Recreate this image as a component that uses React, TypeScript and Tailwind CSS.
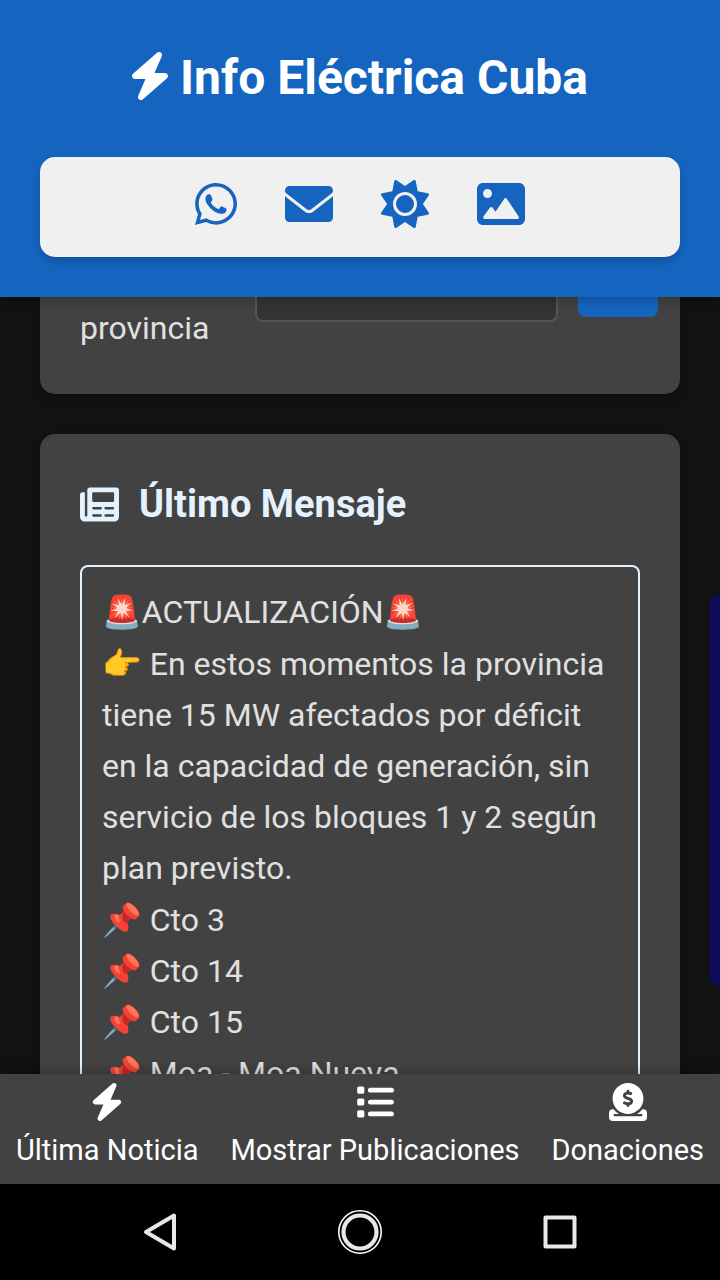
import React from "react";
import { FaCircleDollarToSlot, FaList, FaSun, FaWhatsapp } from "react-icons/fa6";

type IconProps = { className?: string };

function BoltIcon({ className }: IconProps) {
  return (
    <svg viewBox="0 0 384 512" className={className} fill="currentColor" aria-hidden="true">
      <path d="M240.500 224H352C365.300 224 377.300 232.300 381.100 244.700C386.600 257.200 383.100 271.300 373.100 280.100L117.100 504.100C105.800 513.900 89.270 514.700 77.190 505.900C65.100 497.100 60.700 481.100 66.590 467.400L143.500 288H31.100C18.670 288 6.733 279.700 2.044 267.300C-2.645 254.800 .8944 240.700 10.930 231.900L266.900 7.918C278.200-1.920 294.700-2.669 306.800 6.114C318.900 14.900 323.300 30.870 317.400 44.610L240.500 224z" />
    </svg>
  );
}

function EnvelopeIcon({ className }: IconProps) {
  return (
    <svg viewBox="0 0 512 512" className={className} fill="currentColor" aria-hidden="true">
      <path d="M256 352c-16.530 0-33.060-5.422-47.160-16.410L0 173.200V400C0 426.500 21.490 448 48 448h416c26.510 0 48-21.490 48-48V173.200l-208.800 162.500C289.100 346.600 272.500 352 256 352zM16.290 145.300l212.200 165.100c16.190 12.600 38.870 12.600 55.060 0l212.200-165.100C505.100 137.300 512 125 512 112C512 85.490 490.500 64 464 64h-416C21.490 64 0 85.490 0 112C0 125 6.010 137.300 16.290 145.300z" />
    </svg>
  );
}

function ImageIcon({ className }: IconProps) {
  return (
    <svg viewBox="0 0 512 512" className={className} fill="currentColor" aria-hidden="true">
      <path d="M448 32H64C28.650 32 0 60.650 0 96v320c0 35.350 28.650 64 64 64h384c35.350 0 64-28.650 64-64V96C512 60.650 483.300 32 448 32zM112 96c26.510 0 48 21.490 48 48S138.500 192 112 192s-48-21.490-48-48S85.480 96 112 96zM446.100 407.600C443.300 412.800 437.900 416 432 416H82.010c-6.021 0-11.530-3.379-14.260-8.750c-2.730-5.367-2.215-11.810 1.334-16.680l70-96C142.100 290.400 146.900 288 152 288s9.916 2.441 12.930 6.574l32.460 44.510l93.300-139.100C293.700 194.700 298.700 192 304 192s10.350 2.672 13.310 7.125l128 192C448.600 396 448.900 402.300 446.100 407.600z" />
    </svg>
  );
}

function NewspaperIcon({ className }: IconProps) {
  return (
    <svg viewBox="0 0 512 512" className={className} fill="currentColor" aria-hidden="true">
      <path d="M480 32H128C110.300 32 96 46.330 96 64v336C96 408.800 88.840 416 80 416S64 408.800 64 400V96H32C14.330 96 0 110.300 0 128v288c0 35.350 28.650 64 64 64h384c35.350 0 64-28.650 64-64V64C512 46.330 497.700 32 480 32zM272 416h-96c-8.800 0-16-7.200-16-16s7.200-16 16-16h96c8.800 0 16 7.200 16 16S280.800 416 272 416zM272 320h-96c-8.800 0-16-7.200-16-16s7.200-16 16-16h96c8.800 0 16 7.200 16 16S280.800 320 272 320zM432 416h-96c-8.800 0-16-7.200-16-16s7.200-16 16-16h96c8.800 0 16 7.200 16 16S440.800 416 432 416zM432 320h-96c-8.800 0-16-7.200-16-16s7.200-16 16-16h96c8.800 0 16 7.200 16 16S440.800 320 432 320zM448 208c0 8.800-7.200 16-16 16h-256c-8.800 0-16-7.200-16-16v-96c0-8.800 7.200-16 16-16h256c8.800 0 16 7.200 16 16V208z" />
    </svg>
  );
}

const headerLinks = [
  { label: "WhatsApp", icon: <FaWhatsapp className="h-12 w-[42px]" /> },
  { label: "Correo", icon: <EnvelopeIcon className="size-12" /> },
  { label: "Tema", icon: <FaSun className="size-12" /> },
  { label: "Imagen", icon: <ImageIcon className="size-12" /> },
];

const circuits = ["Cto 3", "Cto 14", "Cto 15", "Moa - Moa Nueva"];

const tabs = [
  { label: "Última Noticia", icon: <BoltIcon className="size-[38px]" /> },
  { label: "Mostrar Publicaciones", icon: <FaList className="size-[38px]" /> },
  { label: "Donaciones", icon: <FaCircleDollarToSlot className="size-[38px]" /> },
];

function Header() {
  return (
    <header className="relative z-10 bg-[#1565c0] p-10 shadow-[0_4px_10px_rgba(0,0,0,0.2)]">
      <h1 className="mb-[42px] flex items-center justify-center gap-3 text-5xl leading-[75px] font-bold text-white">
        <BoltIcon className="mb-1 h-12 w-9" />
        Info Eléctrica Cuba
      </h1>
      <nav className="flex justify-center gap-12 rounded-[15px] bg-[#f0f0f0] pt-[23px] pb-[29px] text-[#1565c0] shadow-[0_4px_8px_rgba(0,0,0,0.2)]">
        {headerLinks.map((l) => (
          <a key={l.label} href="#" aria-label={l.label}>
            {l.icon}
          </a>
        ))}
      </nav>
    </header>
  );
}

function ProvinceCard() {
  return (
    <section className="flex items-start gap-5 rounded-b-[15px] bg-[#424242] pr-[22px] pb-10 pl-10 shadow-[0_4px_8px_rgba(0,0,0,0.2)]">
      <label htmlFor="province" className="w-[155px] pt-1.5 leading-[51px]">
        provincia
      </label>
      <select
        id="province"
        className="h-[25px] min-w-0 flex-1 appearance-none rounded-b-lg border-2 border-t-0 border-[#555] bg-[#333]"
      />
      <button aria-label="Buscar" className="h-5 w-20 rounded-b-lg bg-[#1565c0]" />
    </section>
  );
}

function MessageCard() {
  return (
    <section className="rounded-[15px] bg-[#424242] p-10 shadow-[0_4px_8px_rgba(0,0,0,0.2)]">
      <h2 className="mb-[30px] flex items-center gap-5 text-[38px] leading-[61px] font-bold text-[#e3f2fd]">
        <NewspaperIcon className="size-[39px]" />
        Último Mensaje
      </h2>
      <div className="flex flex-col gap-px rounded-lg border-2 border-[#e3f2fd] p-5 leading-[51px]">
        <p>🚨ACTUALIZACIÓN🚨</p>
        <p>
          👉 En estos momentos la provincia tiene 15 MW afectados por déficit en la capacidad de
          generación, sin servicio de los bloques 1 y 2 según plan previsto.
        </p>
        <ul>
          {circuits.map((c) => (
            <li key={c}>📌 {c}</li>
          ))}
        </ul>
      </div>
    </section>
  );
}

function TabBar() {
  return (
    <nav className="relative z-10 flex justify-around bg-[#424242] pt-[9px] pb-[11px] text-white shadow-[0_-4px_10px_rgba(0,0,0,0.2)]">
      {tabs.map((t) => (
        <a key={t.label} href="#" className="flex flex-col items-center gap-1.5 text-[29px] leading-[46px]">
          {t.icon}
          <span>{t.label}</span>
        </a>
      ))}
    </nav>
  );
}

function SystemBar() {
  return (
    <div className="relative z-10 grid h-24 grid-cols-3 bg-black px-[60px] text-[#e8e8e8]">
      <button aria-label="Atrás" className="flex items-center justify-center">
        <svg viewBox="0 0 48 48" className="size-12" fill="none" stroke="currentColor" strokeWidth="4" strokeLinejoin="round">
          <path d="M38 7.500V40.500L10 24Z" />
        </svg>
      </button>
      <button aria-label="Inicio" className="flex items-center justify-center">
        <svg viewBox="0 0 48 48" className="size-12" fill="none">
          <circle cx="24" cy="24" r="21.200" stroke="#fff" strokeWidth="1.600" />
          <circle cx="24" cy="24" r="16.500" stroke="currentColor" strokeWidth="4.200" />
        </svg>
      </button>
      <button aria-label="Recientes" className="flex items-center justify-center">
        <svg viewBox="0 0 48 48" className="size-12" fill="none" stroke="currentColor" strokeWidth="4" strokeLinejoin="round">
          <rect x="9.500" y="9.500" width="29" height="29" />
        </svg>
      </button>
    </div>
  );
}

export default function App() {
  return (
    <div className="relative flex h-screen flex-col overflow-hidden bg-[#121212] font-[Roboto,'Noto_Color_Emoji',sans-serif] text-[32px] text-[#e0e0e0]">
      <Header />
      <main className="flex min-h-0 flex-1 flex-col gap-10 overflow-hidden px-10">
        <div className="shrink-0">
          <ProvinceCard />
        </div>
        <div className="shrink-0">
          <MessageCard />
        </div>
      </main>
      <TabBar />
      <SystemBar />
      <div className="absolute top-[595px] right-0 h-[390px] w-2.5 rounded-l-lg bg-[#0f0c5c]" />
    </div>
  );
}
